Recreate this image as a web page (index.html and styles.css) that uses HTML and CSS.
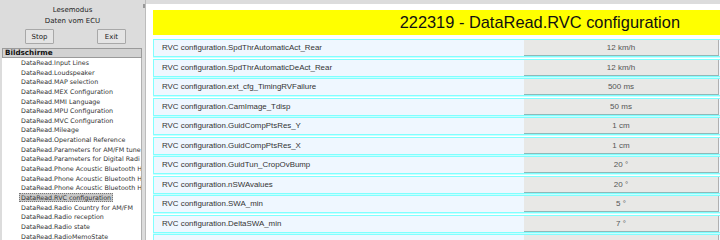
FILE: index.html
```html
<!DOCTYPE html>
<html lang="de">

<head>
    <title>DataRead.RVC configuration</title>
    <meta charset="UTF-8">
    <meta name="viewport" content="width=device-width, initial-scale=1">
    <link rel="stylesheet" href="styles.css">
</head>

<body>
    <div class="app">
        <div class="side">
            <div class="mode">
                <p>Lesemodus</p>
                <p>Daten vom ECU</p>
                <div class="buttons">
                    <button class="btn">Stop</button>
                    <button class="btn">Exit</button>
                </div>
            </div>
            <div class="list">
                <div class="list-head">Bildschirme</div>
                <ul class="items">
                    <li>DataRead.Input Lines</li>
                    <li>DataRead.Loudspeaker</li>
                    <li>DataRead.MAP selection</li>
                    <li>DataRead.MEX Configuration</li>
                    <li>DataRead.MMI Language</li>
                    <li>DataRead.MPU Configuration</li>
                    <li>DataRead.MVC Configuration</li>
                    <li>DataRead.Mileage</li>
                    <li>DataRead.Operational Reference</li>
                    <li>DataRead.Parameters for AM/FM tune</li>
                    <li>DataRead.Parameters for Digital Radi</li>
                    <li>DataRead.Phone Acoustic Bluetooth H</li>
                    <li>DataRead.Phone Acoustic Bluetooth H</li>
                    <li>DataRead.Phone Acoustic Bluetooth H</li>
                    <li class="active"><span>DataRead.RVC configuration</span></li>
                    <li>DataRead.Radio Country for AM/FM</li>
                    <li>DataRead.Radio reception</li>
                    <li>DataRead.Radio state</li>
                    <li>DataRead.RadioMemoState</li>
                </ul>
            </div>
        </div>
        <div class="splitter"><div class="grip"></div></div>
        <div class="main">
            <div class="topbar"></div>
            <div class="content">
                <h1 class="title">222319 - DataRead.RVC configuration</h1>
                <div class="rows">
                    <div class="row"><span class="label">RVC configuration.SpdThrAutomaticAct_Rear</span><span class="value">12 km/h</span></div>
                    <div class="row"><span class="label">RVC configuration.SpdThrAutomaticDeAct_Rear</span><span class="value">12 km/h</span></div>
                    <div class="row"><span class="label">RVC configuration.ext_cfg_TimingRVFailure</span><span class="value">500 ms</span></div>
                    <div class="row"><span class="label">RVC configuration.CamImage_Tdisp</span><span class="value">50 ms</span></div>
                    <div class="row"><span class="label">RVC configuration.GuidCompPtsRes_Y</span><span class="value">1 cm</span></div>
                    <div class="row"><span class="label">RVC configuration.GuidCompPtsRes_X</span><span class="value">1 cm</span></div>
                    <div class="row"><span class="label">RVC configuration.GuidTun_CropOvBump</span><span class="value">20 °</span></div>
                    <div class="row"><span class="label">RVC configuration.nSWAvalues</span><span class="value">20 °</span></div>
                    <div class="row"><span class="label">RVC configuration.SWA_min</span><span class="value">5 °</span></div>
                    <div class="row"><span class="label">RVC configuration.DeltaSWA_min</span><span class="value">7 °</span></div>
                    <div class="row"><span class="label"></span><span class="value"></span></div>
                </div>
            </div>
        </div>
    </div>
</body>

</html>
```

FILE: styles.css
```css
* {
    padding: 0;
    margin: 0;
    box-sizing: border-box;
}

body {
    background-color: #dcdcdc;
    font-family: "DejaVu Sans", sans-serif;
    overflow: hidden;
}

.app {
    display: flex;
    height: 240px;
    width: 720px;
    overflow: hidden;
}

.side {
    width: 143px;
    flex-shrink: 0;
    background-color: #dcdcdc;
    display: flex;
    flex-direction: column;
}

.mode {
    text-align: center;
    font-size: 7px;
    color: #222;
    padding-top: 5px;
    padding-left: 2px;
}

.mode p {
    line-height: 11px;
}

.buttons {
    display: flex;
    justify-content: space-between;
    padding: 2px 17px 0 23px;
}

.btn {
    font-family: "DejaVu Sans", sans-serif;
    font-size: 7px;
    color: #222;
    width: 29px;
    height: 15px;
    background-color: #e4e4e4;
    border: 1px solid #a8a8a8;
    border-radius: 1px;
}

.list {
    margin-top: 4px;
    margin-left: 2px;
    margin-right: 1px;
    flex: 1;
}

.list-head {
    font-size: 7.2px;
    font-weight: bold;
    color: #111;
    background-color: #d2d2d2;
    border: 1px solid #9a9a9a;
    height: 10px;
    line-height: 8px;
    padding-left: 2px;
}

.items {
    list-style: none;
    background-color: #fff;
    border-right: 1px solid #b0b0b0;
    height: 200px;
}

.items li {
    font-size: 6.35px;
    color: #333;
    height: 9.65px;
    line-height: 9.65px;
    padding-left: 19px;
    white-space: nowrap;
    overflow: hidden;
}

.items li.active span {
    background-color: #c8c8c8;
    border: 1px dotted #777;
    padding: 0 1px;
    margin-left: -2px;
}

.splitter {
    width: 3px;
    flex-shrink: 0;
    background-color: #dcdcdc;
    border-right: 1px solid #bcbcbc;
    padding-top: 4px;
}

.grip {
    width: 2px;
    height: 4px;
    background-color: #999;
}

.main {
    flex: 1;
    background-color: #fff;
    overflow: hidden;
}

.topbar {
    height: 4px;
    background-color: #dcdcdc;
}

.content {
    padding: 6px 0 0 7px;
}

.title {
    background-color: #ffff00;
    font-family: "Liberation Sans", Arial, sans-serif;
    font-weight: normal;
    font-size: 16.4px;
    color: #111;
    height: 25px;
    line-height: 24px;
    text-align: right;
    padding-right: 42px;
    margin-right: -2px;
}

.rows {
    display: flex;
    flex-direction: column;
    gap: 1.5px;
    padding-top: 4px;
}

.row {
    display: flex;
    height: 18px;
    background-color: #eff7ff;
    border: 1px solid #80ffff;
    border-right: none;
    box-shadow: 0 1px 0 #c8ffff;
}

.label {
    flex: 1;
    font-family: "Liberation Sans", Arial, sans-serif;
    font-size: 7.9px;
    color: #333;
    line-height: 16px;
    padding-left: 8px;
    white-space: nowrap;
}

.value {
    width: 195px;
    margin-right: 1px;
    background-color: #e8e8e6;
    border-bottom: 1px solid #8fb8b8;
    border-right: 1px solid #b0b0b0;
    font-family: "Liberation Sans", Arial, sans-serif;
    font-size: 8px;
    color: #555;
    text-align: center;
    line-height: 16px;
}
```
